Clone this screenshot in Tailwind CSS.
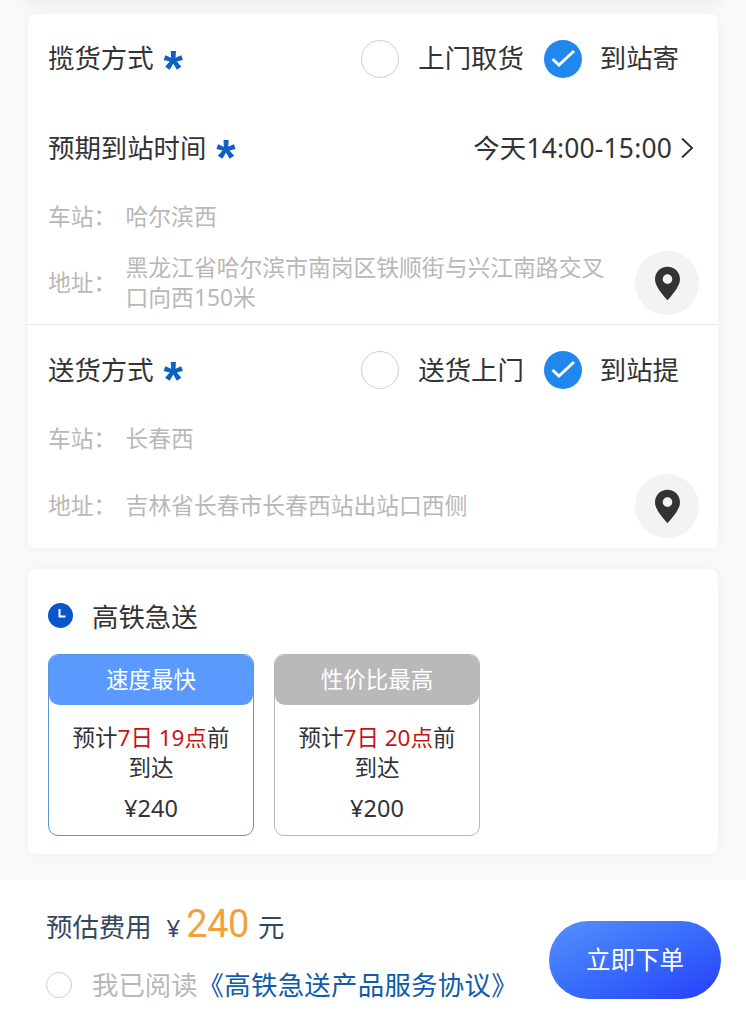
<!DOCTYPE html>
<html lang="zh">
<head>
<meta charset="utf-8">
<script src="https://cdn.jsdelivr.net/npm/@tailwindcss/browser@4"></script>
</head>
<body class="m-0">
<div class="relative w-[746px] h-[1024px] overflow-hidden flex flex-col bg-[#f9f9f9] font-['Noto_Sans','Noto_Sans_CJK_SC',sans-serif] text-[#333333]">
  <div class="h-0 mx-[28px] shadow-[0_0_10px_4px_rgba(0,0,0,0.05)]"></div>
  <main class="flex-1 px-[28px] pt-[14px] flex flex-col gap-[21px]">
    <section class="bg-white rounded-[8px] shadow-[0_0_12px_rgba(0,0,0,0.04)] h-[534px] flex flex-col">
      <div class="h-[311px] flex flex-col">
        <div class="h-[89px] flex items-center pl-[20px] pr-[39px]">
          <span class="text-[26.4px] leading-none">揽货方式</span>
          <span class="ml-[10px] text-[#0f62c4] text-[50px] font-bold leading-none mt-[20px] font-['Liberation_Sans',sans-serif]">*</span>
          <div class="ml-auto flex items-center">
            <span class="w-[38px] h-[38px] rounded-full border-[1.5px] border-[#cfcfcf]"></span>
            <span class="ml-[19px] text-[26.4px] leading-none">上门取货</span>
            <svg class="ml-[20px]" width="38" height="38" viewBox="0 0 38 38"><circle cx="19" cy="19" r="19" fill="#1f87ee"/><path d="M8.500 19l6.500 6L30 11" fill="none" stroke="#fff" stroke-width="3"/></svg>
            <span class="ml-[18px] text-[26.4px] leading-none">到站寄</span>
          </div>
        </div>
        <div class="h-[90px] flex items-center pl-[20px] pr-[24px]">
          <span class="text-[26.4px] leading-none">预期到站时间</span>
          <span class="ml-[10px] text-[#0f62c4] text-[50px] font-bold leading-none mt-[20px] font-['Liberation_Sans',sans-serif]">*</span>
          <span class="ml-auto text-[26.4px] leading-none tracking-[0.2px]">今天14:00-15:00</span>
          <svg class="ml-[8px]" width="14" height="22" viewBox="0 0 14 22"><path d="M2 1.500l10 9.500-10 9.500" fill="none" stroke="#333" stroke-width="2"/></svg>
        </div>
        <div class="h-[49px] flex items-center pl-[20px] text-[22.8px] text-[#b8b8b8]">
          <span class="w-[77.500px]">车站：</span><span>哈尔滨西</span>
        </div>
        <div class="flex-1 flex items-center pl-[20px] pr-[19px] text-[22.8px] text-[#b8b8b8]">
          <span class="w-[77.500px] shrink-0">地址：</span>
          <span class="w-[490px] leading-[30px]">黑龙江省哈尔滨市南岗区铁顺街与兴江南路交叉口向西150米</span>
          <span class="ml-auto w-[64px] h-[64px] rounded-full bg-[#f3f3f3] flex items-center justify-center">
            <svg width="25" height="35" viewBox="0 0 26 35"><path fill-rule="evenodd" d="M13 0C5.800 0 0 5.600 0 13c0 8 9 17 13 22 4-5 13-14 13-22C26 5.600 20.200 0 13 0zm0 8a5 5 0 1 1 0 10 5 5 0 0 1 0-10z" fill="#333"/></svg>
          </span>
        </div>
      </div>
      <div class="h-px bg-[#e6e6e6]"></div>
      <div class="flex-1 flex flex-col">
        <div class="h-[90px] flex items-center pl-[20px] pr-[39px]">
          <span class="text-[26.4px] leading-none">送货方式</span>
          <span class="ml-[10px] text-[#0f62c4] text-[50px] font-bold leading-none mt-[20px] font-['Liberation_Sans',sans-serif]">*</span>
          <div class="ml-auto flex items-center">
            <span class="w-[38px] h-[38px] rounded-full border-[1.5px] border-[#cfcfcf]"></span>
            <span class="ml-[19px] text-[26.4px] leading-none">送货上门</span>
            <svg class="ml-[20px]" width="38" height="38" viewBox="0 0 38 38"><circle cx="19" cy="19" r="19" fill="#1f87ee"/><path d="M8.500 19l6.500 6L30 11" fill="none" stroke="#fff" stroke-width="3"/></svg>
            <span class="ml-[18px] text-[26.4px] leading-none">到站提</span>
          </div>
        </div>
        <div class="h-[49px] flex items-center pl-[20px] text-[22.8px] text-[#b8b8b8]">
          <span class="w-[77.500px]">车站：</span><span>长春西</span>
        </div>
        <div class="h-[84px] flex items-center pl-[20px] pr-[19px] text-[22.8px] text-[#b8b8b8]">
          <span class="w-[77.500px] shrink-0">地址：</span>
          <span>吉林省长春市长春西站出站口西侧</span>
          <span class="ml-auto w-[64px] h-[64px] rounded-full bg-[#f3f3f3] flex items-center justify-center">
            <svg width="25" height="35" viewBox="0 0 26 35"><path fill-rule="evenodd" d="M13 0C5.800 0 0 5.600 0 13c0 8 9 17 13 22 4-5 13-14 13-22C26 5.600 20.200 0 13 0zm0 8a5 5 0 1 1 0 10 5 5 0 0 1 0-10z" fill="#333"/></svg>
          </span>
        </div>
      </div>
    </section>
    <section class="bg-white rounded-[8px] shadow-[0_0_12px_rgba(0,0,0,0.04)] h-[285px] pl-[20px] pt-[33px]">
      <div class="flex items-center h-[30px]">
        <svg class="-mt-[3px]" width="25" height="25" viewBox="0 0 25 25"><circle cx="12.500" cy="12.500" r="12.500" fill="#0a55c9"/><path d="M11.500 6v7.500h6" fill="none" stroke="#fff" stroke-width="2"/></svg>
        <span class="ml-[19px] text-[26.4px] leading-none">高铁急送</span>
      </div>
      <div class="mt-[22px] flex gap-[20px]">
        <article class="w-[206px] h-[182px] rounded-[10px] border-[1.5px] border-[#5a96d6] overflow-hidden flex flex-col items-center">
          <div class="w-full h-[51px] bg-[#5a9aff] rounded-b-[10px] flex items-center justify-center text-white text-[22.500px] -mt-px">速度最快</div>
          <p class="w-[165px] mt-[18px] text-center text-[22.500px] leading-[30px]">预计<span class="text-[#c81414]">7日 19点</span>前到达</p>
          <p class="mt-[10px] text-[23.500px] leading-[30px]">¥240</p>
        </article>
        <article class="w-[206px] h-[182px] rounded-[10px] border-[1.5px] border-[#b8b8b8] overflow-hidden flex flex-col items-center">
          <div class="w-full h-[51px] bg-[#b9b9b9] rounded-b-[10px] flex items-center justify-center text-white text-[22.500px] -mt-px">性价比最高</div>
          <p class="w-[165px] mt-[18px] text-center text-[22.500px] leading-[30px]">预计<span class="text-[#c81414]">7日 20点</span>前到达</p>
          <p class="mt-[10px] text-[23.500px] leading-[30px]">¥200</p>
        </article>
      </div>
    </section>
  </main>
  <footer class="h-[144px] bg-white flex items-center pl-[46px] pr-[25px]">
    <div class="flex-1 flex flex-col">
      <div class="-mt-px flex items-baseline text-[#34495e] text-[26.4px] leading-none h-[38px]">
        <span>预估费用</span><span class="ml-[15px] text-[24px]">¥</span><span class="ml-[6px] text-[38px] tracking-[-0.500px] text-[#f0a33c] font-['Roboto',sans-serif]">240</span><span class="ml-[9px]">元</span>
      </div>
      <div class="mt-[29px] flex items-center text-[26.4px] leading-none">
        <span class="w-[26px] h-[26px] rounded-full border-[1.5px] border-[#cfcfcf]"></span>
        <span class="ml-[20px] text-[#b8b8b8]">我已阅读</span>
        <span class="tracking-[0.3px] text-[#0f5ca8]">《高铁急送产品服务协议》</span>
      </div>
    </div>
    <button class="mt-[16px] w-[172px] h-[78px] rounded-full bg-linear-to-br from-[#5590fb] to-[#2a39fb] text-white text-[24.500px] leading-none">立即下单</button>
  </footer>
</div>
</body>
</html>
